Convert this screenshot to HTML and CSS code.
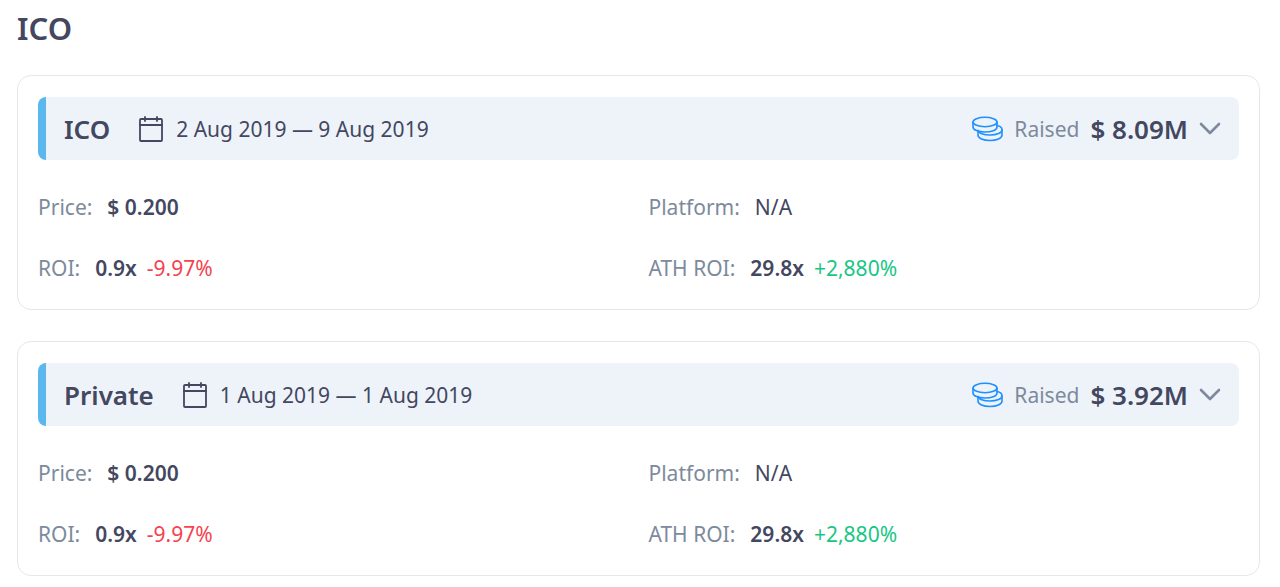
FILE: index.html
```html
<!DOCTYPE html>
<html lang="en">
<head>
  <meta charset="UTF-8" />
  <meta name="viewport" content="width=device-width, initial-scale=1" />
  <title>ICO</title>
  <link rel="stylesheet" href="styles.css">
</head>
<body>

  <main class="content">
    <h1 class="page-title">ICO</h1>

    <section class="sale-card">
      <header class="sale-header">
        <h2 class="sale-name">ICO</h2>
        <div class="sale-dates">
          <svg class="icon-calendar" viewBox="0 0 26 26" aria-hidden="true">
            <rect x="2" y="3" width="22" height="22" rx="1" />
            <path d="M2 9h22M7 1v4M19 1v4" />
          </svg>
          <span>2 Aug 2019 — 9 Aug 2019</span>
        </div>
        <div class="sale-raised">
          <svg class="icon-coins" viewBox="0 0 31 26" aria-hidden="true">
            <ellipse cx="13" cy="6" rx="12" ry="4.700" />
            <path d="M1 6v5c0 2.800 5.300 5 12 5 6 0 12-1.600 12-5V6" />
            <path d="M25 9.500c3 .6 5 2.200 5 4.200 0 3.200-5.200 5.300-12 5.300-6.500 0-11.500-2-12-4.500" />
            <path d="M6 14.500V19c0 3.200 5.200 5.500 12 5.500s12-2.300 12-5.500v-5" />
          </svg>
          <span class="raised-label">Raised</span>
          <span class="raised-value">$ 8.09M</span>
          <button class="toggle-button" type="button" aria-label="Toggle ICO details" aria-expanded="true">
            <svg class="icon-chevron" viewBox="0 0 22 14" aria-hidden="true"><path d="M2 2l9 9 9-9" /></svg>
          </button>
        </div>
      </header>
      <dl class="sale-stats">
        <div class="stat">
          <dt>Price:</dt>
          <dd><b>$ 0.200</b></dd>
        </div>
        <div class="stat">
          <dt>Platform:</dt>
          <dd>N/A</dd>
        </div>
        <div class="stat">
          <dt>ROI:</dt>
          <dd><b>0.9x</b> <span class="down">-9.97%</span></dd>
        </div>
        <div class="stat">
          <dt>ATH ROI:</dt>
          <dd><b>29.8x</b> <span class="up">+2,880%</span></dd>
        </div>
      </dl>
    </section>

    <section class="sale-card">
      <header class="sale-header">
        <h2 class="sale-name">Private</h2>
        <div class="sale-dates">
          <svg class="icon-calendar" viewBox="0 0 26 26" aria-hidden="true">
            <rect x="2" y="3" width="22" height="22" rx="1" />
            <path d="M2 9h22M7 1v4M19 1v4" />
          </svg>
          <span>1 Aug 2019 — 1 Aug 2019</span>
        </div>
        <div class="sale-raised">
          <svg class="icon-coins" viewBox="0 0 31 26" aria-hidden="true">
            <ellipse cx="13" cy="6" rx="12" ry="4.700" />
            <path d="M1 6v5c0 2.800 5.300 5 12 5 6 0 12-1.600 12-5V6" />
            <path d="M25 9.500c3 .6 5 2.200 5 4.200 0 3.200-5.200 5.300-12 5.300-6.500 0-11.500-2-12-4.500" />
            <path d="M6 14.500V19c0 3.200 5.200 5.500 12 5.500s12-2.300 12-5.500v-5" />
          </svg>
          <span class="raised-label">Raised</span>
          <span class="raised-value">$ 3.92M</span>
          <button class="toggle-button" type="button" aria-label="Toggle Private details" aria-expanded="true">
            <svg class="icon-chevron" viewBox="0 0 22 14" aria-hidden="true"><path d="M2 2l9 9 9-9" /></svg>
          </button>
        </div>
      </header>
      <dl class="sale-stats">
        <div class="stat">
          <dt>Price:</dt>
          <dd><b>$ 0.200</b></dd>
        </div>
        <div class="stat">
          <dt>Platform:</dt>
          <dd>N/A</dd>
        </div>
        <div class="stat">
          <dt>ROI:</dt>
          <dd><b>0.9x</b> <span class="down">-9.97%</span></dd>
        </div>
        <div class="stat">
          <dt>ATH ROI:</dt>
          <dd><b>29.8x</b> <span class="up">+2,880%</span></dd>
        </div>
      </dl>
    </section>
  </main>

  <script src="script.js"></script>
</body>
</html>
```
FILE: styles.css
```css
* {
  box-sizing: border-box;
}

body, h1, h2, dl, dd {
  margin: 0;
}

body {
  font-family: "Noto Sans", sans-serif;
  font-size: 21px;
  line-height: 30px;
  color: #43475f;
  background: #fff;
}

.content {
  padding: 8px 20px 12px 17px;
}

.page-title {
  margin-bottom: 27px;
  font-size: 31px;
  line-height: 40px;
  font-weight: 600;
}

.sale-card {
  margin-bottom: 31px;
  padding: 21px 20px 26px;
  border: 1px solid #e3e8ee;
  border-radius: 14px;
}

.sale-card:last-child {
  margin-bottom: 0;
}

/* Header bar */
.sale-header {
  display: flex;
  align-items: center;
  flex-wrap: wrap;
  gap: 28px;
  min-height: 63px;
  padding: 0 18px;
  border-left: 8px solid #5bb8ee;
  border-radius: 8px;
  background: #eef3fa;
}

.sale-name {
  font-size: 26px;
  font-weight: 600;
}

.sale-dates {
  display: flex;
  align-items: center;
  gap: 12px;
}

.sale-raised {
  display: flex;
  align-items: center;
  gap: 11px;
  margin-left: auto;
}

.raised-label {
  color: #7d8a9c;
}

.raised-value {
  font-size: 26px;
  font-weight: 600;
}

.toggle-button {
  display: flex;
  padding: 0;
  border: 0;
  background: none;
  cursor: pointer;
}

/* Icons */
.icon-calendar,
.icon-coins,
.icon-chevron {
  display: block;
  fill: none;
  stroke-linecap: round;
  stroke-linejoin: round;
}

.icon-calendar {
  width: 26px;
  height: 26px;
  stroke: #43475f;
  stroke-width: 1.8;
}

.icon-coins {
  width: 31px;
  height: 26px;
  stroke: #1e90ff;
  stroke-width: 1.6;
}

.icon-chevron {
  width: 22px;
  height: 14px;
  stroke: #7d8a9c;
  stroke-width: 2.6;
}

/* Stats */
.sale-stats {
  display: grid;
  grid-template-columns: 1fr 1fr;
  gap: 31px 20px;
  padding-top: 32px;
}

.sale-stats[hidden] {
  display: none;
}

.stat {
  display: flex;
  gap: 15px;
}

.stat dt {
  color: #7d8a9c;
}

.stat dd {
  display: flex;
  gap: 10px;
}

.stat b {
  font-weight: 600;
}

.down {
  color: #f4434f;
}

.up {
  color: #16c784;
}

@media (max-width: 760px) {
  .sale-header {
    padding: 12px;
    gap: 12px;
  }

  .sale-stats {
    grid-template-columns: 1fr;
  }
}
```
FILE: script.js
```javascript
document.querySelectorAll('.toggle-button').forEach(button => {
  button.addEventListener('click', () => {
    const stats = button.closest('.sale-card').querySelector('.sale-stats');
    stats.hidden = !stats.hidden;
    button.setAttribute('aria-expanded', String(!stats.hidden));
  });
});
```
